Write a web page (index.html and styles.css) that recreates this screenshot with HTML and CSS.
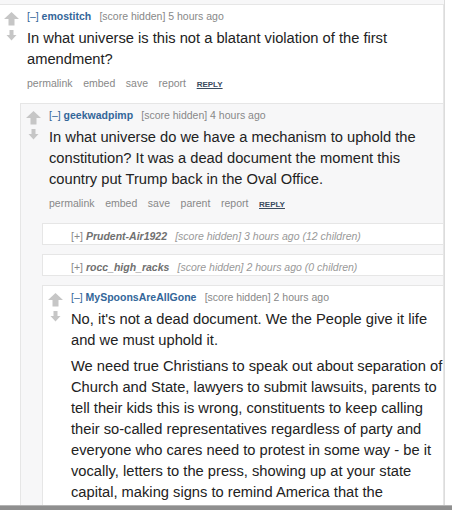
FILE: index.html
```html
<!DOCTYPE html>
<html lang="en">
<head>
    <meta charset="UTF-8">
    <meta name="viewport" content="width=device-width, initial-scale=1.0">
    <title>Comments</title>
    <link rel="stylesheet" href="styles.css">
</head>
<body>
    <div class="viewport">
        <div class="thread">
            <div class="comment">
                <div class="row">
                    <div class="midcol">
                        <svg class="arrow up" width="15" height="14" viewBox="0 0 15 14"><path d="M7.5 0 L15 7 H10.5 V13.5 H4.5 V7 H0 Z"/></svg>
                        <svg class="arrow down" width="15" height="11" viewBox="0 0 15 11"><path d="M5.5 0 H9.5 V5 H12.5 L7.5 10.5 L2.5 5 H5.5 Z"/></svg>
                    </div>
                    <div class="entry">
                        <p class="tagline"><a class="expand">[–]</a> <a class="author">emostitch</a> <span class="score">[score hidden]</span> <time>5 hours ago</time></p>
                        <div class="md">
                            <p>In what universe is this not a blatant violation of the first amendment?</p>
                        </div>
                        <ul class="buttons">
                            <li>permalink</li>
                            <li>embed</li>
                            <li>save</li>
                            <li>report</li>
                            <li class="reply">reply</li>
                        </ul>
                    </div>
                </div>

                <div class="child">
                    <div class="comment nested even">
                        <div class="row">
                            <div class="midcol">
                                <svg class="arrow up" width="15" height="14" viewBox="0 0 15 14"><path d="M7.5 0 L15 7 H10.5 V13.5 H4.5 V7 H0 Z"/></svg>
                                <svg class="arrow down" width="15" height="11" viewBox="0 0 15 11"><path d="M5.5 0 H9.5 V5 H12.5 L7.5 10.5 L2.5 5 H5.5 Z"/></svg>
                            </div>
                            <div class="entry">
                                <p class="tagline"><a class="expand">[–]</a> <a class="author">geekwadpimp</a> <span class="score">[score hidden]</span> <time>4 hours ago</time></p>
                                <div class="md">
                                    <p>In what universe do we have a mechanism to uphold the constitution? It was a dead document the moment this country put Trump back in the Oval Office.</p>
                                </div>
                                <ul class="buttons">
                                    <li>permalink</li>
                                    <li>embed</li>
                                    <li>save</li>
                                    <li>parent</li>
                                    <li>report</li>
                                    <li class="reply">reply</li>
                                </ul>
                            </div>
                        </div>

                        <div class="child">
                            <div class="comment nested collapsed">
                                <p class="tagline"><a class="expand">[+]</a> <a class="author">Prudent-Air1922</a> <span class="score">[score hidden]</span> <time>3 hours ago</time> <span class="kids">(12 children)</span></p>
                            </div>
                            <div class="comment nested collapsed">
                                <p class="tagline"><a class="expand">[+]</a> <a class="author">rocc_high_racks</a> <span class="score">[score hidden]</span> <time>2 hours ago</time> <span class="kids">(0 children)</span></p>
                            </div>
                            <div class="comment nested">
                                <div class="row">
                                    <div class="midcol">
                                        <svg class="arrow up" width="15" height="14" viewBox="0 0 15 14"><path d="M7.5 0 L15 7 H10.5 V13.5 H4.5 V7 H0 Z"/></svg>
                                        <svg class="arrow down" width="15" height="11" viewBox="0 0 15 11"><path d="M5.5 0 H9.5 V5 H12.5 L7.5 10.5 L2.5 5 H5.5 Z"/></svg>
                                    </div>
                                    <div class="entry">
                                        <p class="tagline"><a class="expand">[–]</a> <a class="author">MySpoonsAreAllGone</a> <span class="score">[score hidden]</span> <time>2 hours ago</time></p>
                                        <div class="md">
                                            <p>No, it's not a dead document. We the People give it life and we must uphold it.</p>
                                            <p>We need true Christians to speak out about separation of Church and State, lawyers to submit lawsuits, parents to tell their kids this is wrong, constituents to keep calling their so-called representatives regardless of party and everyone who cares need to protest in some way - be it vocally, letters to the press, showing up at your state capital, making signs to remind America that the Constitution protects everyone.</p>
                                        </div>
                                    </div>
                                </div>
                            </div>
                        </div>
                    </div>
                </div>
            </div>
        </div>
    </div>
    <div class="hscroll"></div>
</body>
</html>
```

FILE: styles.css
```css
body {
    margin: 0;
    background: #fff;
    font-family: "Liberation Sans", Arial, sans-serif;
    color: #222;
}
.viewport {
    height: 505px;
    overflow: hidden;
}
.thread {
    background: #f7f7f8;
    padding-top: 4px;
    margin-right: 7px;
    border-right: 1px solid #dcdcdc;
}
.comment {
    background: #fff;
    border: 1px solid #e6e6e6;
    margin-left: -2px;
    padding: 3px 0 12px;
}
.comment.nested {
    margin-left: 0;
    border-right: 0;
}
.comment.even {
    background: #f7f7f8;
}
.row {
    display: flex;
}
.midcol {
    width: 23px;
    padding: 4px 0 0 5px;
    flex-shrink: 0;
}
.arrow {
    display: block;
    fill: #c6c6c6;
}
.arrow.down {
    margin-top: 4px;
}
.entry {
    flex: 1;
    min-width: 0;
}
.tagline {
    margin: 0;
    font-size: 10.5px;
    line-height: 16px;
    color: #888;
    white-space: nowrap;
}
.expand {
    color: #369;
}
.author {
    color: #369;
    font-weight: bold;
    margin-right: 0.5em;
}
.md {
    margin: 4px -5px 0 0;
    font-size: 14.7px;
    line-height: 21px;
}
.md p {
    margin: 0 0 5px;
}
.md p:last-child {
    margin-bottom: 0;
}
.buttons {
    display: flex;
    gap: 10.6px;
    align-items: baseline;
    height: 16px;
    list-style: none;
    margin: 5px 0 0;
    padding: 0;
    font-size: 10.5px;
    line-height: 16px;
    color: #888;
}
.buttons .reply {
    font-size: 8px;
    line-height: 12px;
    font-weight: bold;
    text-transform: uppercase;
    text-decoration: underline;
    color: #3a4b5f;
}
.child {
    margin: 12px 0 0 21px;
}
.comment.collapsed {
    padding: 4px 0 0 28px;
    margin-bottom: 9px;
}
.collapsed .tagline {
    color: #999;
    font-style: italic;
}
.collapsed .expand {
    color: #888;
    font-style: normal;
}
.collapsed .author {
    color: #707070;
}
.hscroll {
    height: 4px;
    background: #8f8f8f;
    border-top: 1px solid #b4b4b4;
}
```
